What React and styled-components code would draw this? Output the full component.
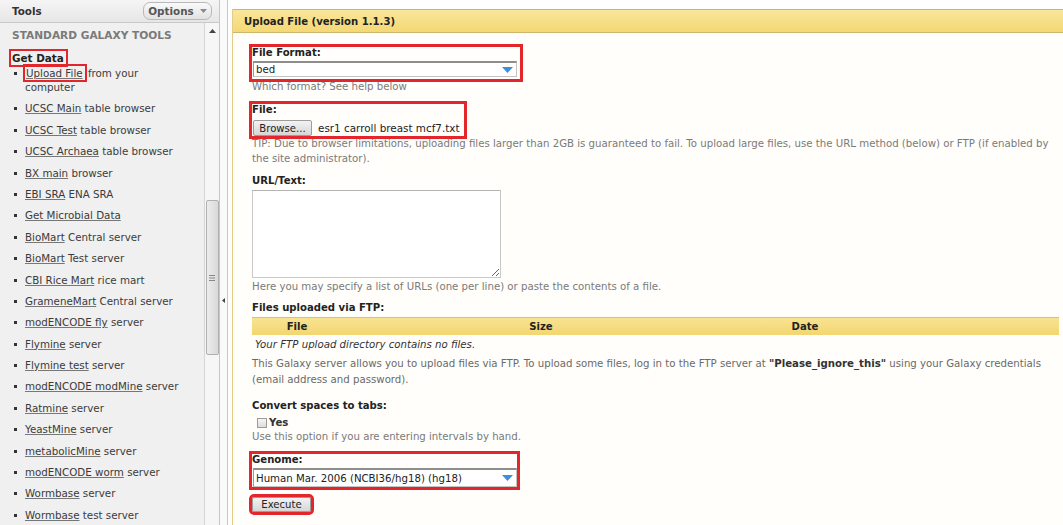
import React from 'react';
import styled, { createGlobalStyle } from 'styled-components';

const GlobalStyle = createGlobalStyle`
  html, body { margin: 0; padding: 0; background: #fff; }
  body {
    font-family: "DejaVu Sans", Verdana, sans-serif;
    font-size: 10.2px;
    color: #333;
  }
`;

const RED = '#e2262c';

const Page = styled.div`
  display: flex;
  width: 1063px;
  height: 525px;
  overflow: hidden;
`;

/* ---------- tool panel ---------- */

const Sidebar = styled.aside`
  width: 220px;
  flex: none;
  display: flex;
  flex-direction: column;
  background: #f0f0f0;
  border-right: 1px solid #c6c6c6;
  box-sizing: border-box;
`;

const SidebarHeader = styled.div`
  height: 23px;
  flex: none;
  box-sizing: border-box;
  display: flex;
  align-items: center;
  justify-content: space-between;
  padding: 0 7px 0 12px;
  background: linear-gradient(#f5f5f5, #e6e6e6);
  border-bottom: 1px solid #c9c9c9;
`;

const HeaderTitle = styled.span`
  font-weight: bold;
  font-size: 10.4px;
  color: #333;
`;

const OptionsButton = styled.button`
  width: 69px;
  height: 18px;
  box-sizing: border-box;
  display: flex;
  align-items: center;
  justify-content: center;
  gap: 6px;
  padding: 0;
  font-family: inherit;
  font-size: 10.4px;
  font-weight: bold;
  color: #555;
  border: 1px solid #b9b9b9;
  border-radius: 7px;
  background: linear-gradient(#fafafa, #e2e2e2);
`;

const SidebarBody = styled.div`
  flex: 1;
  min-height: 0;
  display: flex;
`;

const ToolList = styled.div`
  flex: 1;
  overflow: hidden;
  padding: 5px 0 0 12px;
`;

const SectionTitle = styled.div`
  font-weight: bold;
  font-size: 10.6px;
  line-height: 14px;
  color: #7a7a7a;
  white-space: nowrap;
`;

const GroupTitle = styled.div`
  margin-top: 9px;
  line-height: 14px;
  font-weight: bold;
  font-size: 10.4px;
  color: #222;
`;

const Marked = styled.span`
  display: inline-block;
  padding: 0 2px 0 1px;
  margin-left: ${(p) => p.$shift || 0}px;
  outline: 2.5px solid ${RED};
`;

const Items = styled.ul`
  list-style: none;
  margin: 1px 0 0;
  padding: 0;
`;

const Item = styled.li`
  display: flex;
  align-items: flex-start;
  line-height: 14px;
  margin-bottom: 7.4px;
  font-size: 10.3px;
  color: #3c3c3c;
  white-space: ${(p) => (p.$wrap ? 'normal' : 'nowrap')};
  width: ${(p) => (p.$wrap ? '150px' : 'auto')};
`;

const Bullet = styled.span`
  flex: none;
  width: 3px;
  height: 3px;
  margin: 6px 8px 0 2px;
  background: #333;
`;

const ToolLink = styled.a`
  color: #3a3a3a;
  text-decoration: underline;
  text-decoration-color: #777;
`;

const Scrollbar = styled.div`
  width: 15px;
  flex: none;
  display: flex;
  flex-direction: column;
  align-items: center;
  background: #f6f6f6;
  border-left: 1px solid #d6d6d6;
  box-sizing: border-box;
`;

const ScrollArrow = styled.div`
  height: 16px;
  display: flex;
  align-items: center;
  justify-content: center;
`;

const ScrollThumb = styled.div`
  margin-top: 161px;
  width: 13px;
  height: 155px;
  box-sizing: border-box;
  border: 1px solid #b0b0b0;
  border-radius: 2px;
  background: linear-gradient(90deg, #ececec, #d9d9d9);
  display: flex;
  align-items: center;
  justify-content: center;
`;

const Divider = styled.div`
  width: 8px;
  flex: none;
  background: #fafafa;
  border-right: 1px solid #c8c8c8;
  box-sizing: border-box;
  display: flex;
  align-items: center;
  justify-content: center;
  padding-top: 75px;
`;

/* ---------- tool form ---------- */

const Main = styled.main`
  flex: 1;
  min-width: 0;
  padding: 9px 0 0 4px;
  background: #fff;
`;

const FormBox = styled.section`
  height: 100%;
  border-left: 1px solid #e3cd84;
  background: #fffefb;
`;

const FormTitle = styled.div`
  height: 24px;
  box-sizing: border-box;
  display: flex;
  align-items: center;
  padding-left: 11px;
  background: linear-gradient(#f9e69c, #f4d874);
  border-top: 1px solid #cdb66c;
  border-bottom: 1px solid #cdb66c;
  font-weight: bold;
  font-size: 10.1px;
  color: #222;
`;

const FormBody = styled.div`
  padding: 14px 4px 0 19px;
`;

const Highlight = styled.div`
  width: ${(p) => p.$width}px;
  padding-bottom: ${(p) => p.$pb || 0}px;
  margin-top: ${(p) => p.$mt || 0}px;
  outline: 3px solid ${RED};
`;

const Label = styled.div`
  font-weight: bold;
  font-size: 10.1px;
  color: #222;
  line-height: ${(p) => p.$lh || 14}px;
  margin-top: ${(p) => p.$mt || 0}px;
`;

const Hint = styled.div`
  color: #7a7a7a;
  line-height: ${(p) => p.$lh || 14}px;
  margin-top: ${(p) => p.$mt || 0}px;
`;

const Select = styled.div`
  width: 264px;
  height: ${(p) => p.$h}px;
  margin-top: 2px;
  margin-left: 1px;
  box-sizing: border-box;
  display: flex;
  align-items: center;
  justify-content: space-between;
  padding: 0 3px 0 2px;
  background: #fff;
  border: 1px solid #c4c4c4;
  border-top: 2px solid #8e8e8e;
  border-left-color: #9a9a9a;
  color: #222;
`;

const FileRow = styled.div`
  display: flex;
  align-items: center;
  gap: 6px;
  margin-top: 4px;
  margin-left: 1px;
`;

const GreyButton = styled.button`
  height: ${(p) => p.$h || 16}px;
  width: ${(p) => p.$w}px;
  box-sizing: border-box;
  padding: 0;
  font-family: inherit;
  font-size: 10.1px;
  color: #222;
  border: 1px solid #9c9c9c;
  border-radius: 2px;
  background: linear-gradient(#f3f3f3, #d6d6d6);
  display: block;
`;

const FileName = styled.span`
  color: #222;
  font-size: 10.4px;
`;

const UrlArea = styled.textarea`
  display: block;
  width: 249px;
  height: 88px;
  box-sizing: border-box;
  margin: 2px 0 0;
  border: 1px solid #c9c9c9;
  border-top-color: #b4b4b4;
  background: #fff;
  resize: both;
`;

const FtpHead = styled.div`
  display: grid;
  grid-template-columns: 90px 398px 130px 1fr;
  height: 18px;
  margin-top: 2px;
  align-items: center;
  background: linear-gradient(#f8e390, #f3d672);
  border-top: 1px solid #d8c07a;
  box-sizing: border-box;
  font-weight: bold;
  font-size: 10.1px;
  color: #222;
  text-align: center;
`;

const FtpEmpty = styled.div`
  font-style: italic;
  line-height: 20px;
  padding-left: 3px;
  color: #333;
`;

const FtpNote = styled.p`
  margin: 1px 0 0;
  line-height: 16px;
  color: #6a6a6a;
  strong { color: #333; }
`;

const CheckRow = styled.label`
  display: flex;
  align-items: center;
  gap: 2px;
  line-height: 14px;
  margin-top: 3px;
  padding-left: 5px;
  font-weight: bold;
  color: #333;
`;

const CheckBox = styled.span`
  width: 10px;
  height: 10px;
  box-sizing: border-box;
  border: 1px solid #9a9a9a;
  background: linear-gradient(#f6f6f6, #dcdcdc);
`;

const ExecuteButton = styled(GreyButton)`
  margin-top: 10px;
  outline: 3px solid ${RED};
`;

const DropArrow = () => (
  <svg width="11" height="6" viewBox="0 0 11 6">
    <path d="M0 0 H11 L5.5 6 Z" fill="#3d8fdc" />
  </svg>
);

const tools = [
  ['UCSC Main', ' table browser'],
  ['UCSC Test', ' table browser'],
  ['UCSC Archaea', ' table browser'],
  ['BX main', ' browser'],
  ['EBI SRA', ' ENA SRA'],
  ['Get Microbial Data', ''],
  ['BioMart', ' Central server'],
  ['BioMart', ' Test server'],
  ['CBI Rice Mart', ' rice mart'],
  ['GrameneMart', ' Central server'],
  ['modENCODE fly', ' server'],
  ['Flymine', ' server'],
  ['Flymine test', ' server'],
  ['modENCODE modMine', ' server'],
  ['Ratmine', ' server'],
  ['YeastMine', ' server'],
  ['metabolicMine', ' server'],
  ['modENCODE worm', ' server'],
  ['Wormbase', ' server'],
  ['Wormbase', ' test server'],
];

export default function App() {
  return (
    <>
      <GlobalStyle />
      <Page>
        <Sidebar>
          <SidebarHeader>
            <HeaderTitle>Tools</HeaderTitle>
            <OptionsButton>
              Options
              <svg width="7" height="4" viewBox="0 0 7 4">
                <path d="M0 0 H7 L3.5 4 Z" fill="#8a8a8a" />
              </svg>
            </OptionsButton>
          </SidebarHeader>
          <SidebarBody>
            <ToolList>
              <SectionTitle>STANDARD GALAXY TOOLS</SectionTitle>
              <GroupTitle>
                <Marked $shift={-1}>Get Data</Marked>
              </GroupTitle>
              <Items>
                <Item $wrap>
                  <Bullet />
                  <span>
                    <Marked>
                      <ToolLink>Upload File</ToolLink>
                    </Marked>{' '}
                    from your computer
                  </span>
                </Item>
                {tools.map(([link, rest], i) => (
                  <Item key={i}>
                    <Bullet />
                    <span>
                      <ToolLink>{link}</ToolLink>
                      {rest}
                    </span>
                  </Item>
                ))}
              </Items>
            </ToolList>
            <Scrollbar>
              <ScrollArrow>
                <svg width="7" height="4" viewBox="0 0 7 4">
                  <path d="M0 4 H7 L3.5 0 Z" fill="#444" />
                </svg>
              </ScrollArrow>
              <ScrollThumb>
                <svg width="6" height="6" viewBox="0 0 6 6">
                  <path d="M0 0.5 H6 M0 3 H6 M0 5.5 H6" stroke="#888" strokeWidth="1" />
                </svg>
              </ScrollThumb>
            </Scrollbar>
          </SidebarBody>
        </Sidebar>

        <Divider>
          <svg width="3" height="5" viewBox="0 0 3 5">
            <path d="M3 0 V5 L0 2.5 Z" fill="#444" />
          </svg>
        </Divider>

        <Main>
          <FormBox>
            <FormTitle>Upload File (version 1.1.3)</FormTitle>
            <FormBody>
              <Highlight $width={268} $pb={2}>
                <Label $lh={12}>File Format:</Label>
                <Select $h={16}>
                  <span>bed</span>
                  <DropArrow />
                </Select>
              </Highlight>
              <Hint $mt={1}>Which format? See help below</Hint>

              <Highlight $width={212} $mt={10}>
                <Label $lh={12}>File:</Label>
                <FileRow>
                  <GreyButton $w={59}>Browse...</GreyButton>
                  <FileName>esr1 carroll breast mcf7.txt</FileName>
                </FileRow>
              </Highlight>
              <Hint $lh={15}>
                TIP: Due to browser limitations, uploading files larger than 2GB is guaranteed to
                fail. To upload large files, use the URL method (below) or FTP (if enabled by the
                site administrator).
              </Hint>

              <Label $mt={8}>URL/Text:</Label>
              <UrlArea />
              <Hint $mt={2}>
                Here you may specify a list of URLs (one per line) or paste the contents of a file.
              </Hint>

              <Label $mt={7}>Files uploaded via FTP:</Label>
              <FtpHead>
                <span>File</span>
                <span>Size</span>
                <span>Date</span>
                <span />
              </FtpHead>
              <FtpEmpty>Your FTP upload directory contains no files.</FtpEmpty>
              <FtpNote>
                This Galaxy server allows you to upload files via FTP. To upload some files, log in
                to the FTP server at <strong>"Please_ignore_this"</strong> using your Galaxy
                credentials (email address and password).
              </FtpNote>

              <Label $mt={11}>Convert spaces to tabs:</Label>
              <CheckRow>
                <CheckBox />
                Yes
              </CheckRow>
              <Hint>Use this option if you are entering intervals by hand.</Hint>

              <Highlight $width={265} $mt={10}>
                <Label $lh={12}>Genome:</Label>
                <Select $h={19}>
                  <span>Human Mar. 2006 (NCBI36/hg18) (hg18)</span>
                  <DropArrow />
                </Select>
              </Highlight>

              <ExecuteButton $w={59} $h={15}>
                Execute
              </ExecuteButton>
            </FormBody>
          </FormBox>
        </Main>
      </Page>
    </>
  );
}
